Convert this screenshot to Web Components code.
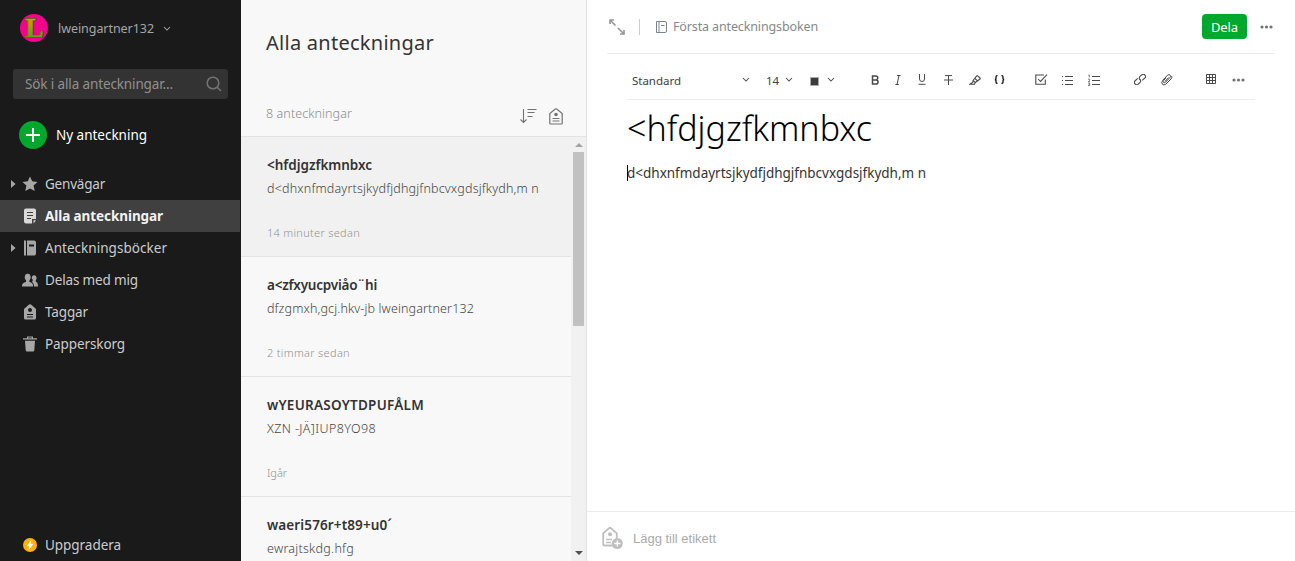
<!DOCTYPE html>
<html lang="sv">
<head>
<meta charset="utf-8">
<title>Alla anteckningar</title>
<style>
html, body { margin: 0; height: 100%; overflow: hidden; }
body { font-family: "Noto Sans", "Open Sans", sans-serif; background: #fff; }
</style>
</head>
<body>
<notes-app></notes-app>
<script>
const define = (name, html, setup) => customElements.define(name, class extends HTMLElement {
  connectedCallback() {
    if (this.shadowRoot) return;
    const t = document.createElement('template');
    t.innerHTML = html;
    this.attachShadow({ mode: 'open' }).append(t.content.cloneNode(true));
    if (setup) setup(this, this.shadowRoot);
  }
});

/* A single line of text whose tracking is set so that it fills the given width. */
define('fit-text', `<style>
  :host { display: block; flex: none; white-space: pre; }
  span { display: inline-block; white-space: pre; }
</style><span><slot></slot></span>`, (host, root) => {
  const span = root.querySelector('span');
  const target = Number(host.getAttribute('width'));
  const natural = span.getBoundingClientRect().width;
  const count = [...host.textContent].length;
  if (target && natural) span.style.letterSpacing = ((target - natural) / count).toFixed(3) + 'px';
});

const icons = {
  chevron: [8, 5, '<path d="M1 1l3 3 3-3" fill="none" stroke="currentColor" stroke-width="1.050"/>'],
  search: [16, 16, '<g fill="none" stroke="currentColor" stroke-width="1.5"><circle cx="7" cy="7" r="5.8"/><path d="M11.2 11.2l3.8 3.8"/></g>'],
  plus: [28, 28, '<circle cx="14" cy="14" r="14" fill="#00a82d"/><path d="M14 7v14M7 14h14" stroke="#fff" stroke-width="2"/>'],
  star: [16, 16, '<path fill="currentColor" d="M8 .6l2.200 4.700 5.300.6-3.900 3.700 1.100 5.400L8 12.400 3.300 15l1.100-5.400L.5 5.900l5.300-.6z"/>'],
  note: [16, 16, '<path fill="currentColor" d="M4 .5h8a2 2 0 012 2V11h-4v4.500H4a2 2 0 01-2-2v-11a2 2 0 012-2zM11.500 12.200H14l-2.500 3.200z"/><path d="M5 4.500h6M5 7.500h6M5 10.500h4" stroke="#404040" stroke-width="1"/>'],
  book: [16, 16, '<path fill="currentColor" d="M2 .5h2v15H2zM5 .5h7a2 2 0 012 2v11a2 2 0 01-2 2H5z"/><path d="M7 5.500h5" stroke="#1a1a1a" stroke-width="2"/>'],
  people: [16, 16, '<g fill="currentColor"><ellipse cx="5.700" cy="5.200" rx="2.900" ry="3.400"/><path d="M4 7h3.400v3c2.600.7 3.700 1.400 3.700 4.500H0C0 11.400 1.400 10.700 4 10z"/><path d="M9.800 5.500a2.400 2.700 0 114.200 2.200c-.6.6-.4 2 .2 2.300 1.300.6 1.800 2 1.800 4.500h-4c0-2.600-.7-3.800-2-4.600.8-1 1-1.500.6-2.400-.6-.5-.8-1-.8-2z"/></g>'],
  tag: [16, 16, '<path fill="currentColor" fill-rule="evenodd" d="M7 .6a1.500 1.500 0 012 0l4.500 3.800q.5.500.5 1.200v8.400a1.500 1.500 0 01-1.500 1.500h-9A1.500 1.500 0 012 14V5.600q0-.7.5-1.200zM8 4a2 2 0 100 4 2 2 0 000-4zM5 10v1h6v-1zM5 12.500v1h6v-1z"/>'],
  trash: [16, 16, '<path fill="currentColor" d="M1 3.500V2.300h4V.5h6v1.800h4v1.200zM6.200 2.300h3.600v-.7H6.200zM3 4.800h10l-.7 9.400q-.1 1.300-1.300 1.300H5q-1.200 0-1.300-1.300z"/>'],
  bolt: [14, 14, '<circle cx="7" cy="7" r="7" fill="#ffb10a"/><path d="M7.900 2.700L4.200 7.900h2.300l-.6 3.500 4-5.200H7.400z" fill="#fff" stroke="#fff" stroke-width=".5"/>'],
  sort: [17, 16, '<path d="M3.500 1v13M.5 11.500l3 3 3-3M7.500 1.500h9M7.500 4.500h7M7.500 8.500h5" fill="none" stroke="currentColor" stroke-width="1.100"/>'],
  tagline: [14, 17, '<path d="M1.500 16h11q.7 0 .7-.7V5.500L7.700 1q-.7-.5-1.400 0L.8 5.500v9.800q0 .7.700.7zM3.500 10.500h7M3.500 13h7" fill="none" stroke="currentColor" stroke-width="1.200"/><circle cx="7" cy="6.500" r="1.800" fill="currentColor"/>'],
  expand: [16, 16, '<path d="M1 5V1H5M1 1l5.500 5.500M9 9l6 6M15 11v4H11" fill="none" stroke="currentColor" stroke-width="1.700"/>'],
  bookline: [11, 12, '<path d="M.5.5h8.500q1.500 0 1.500 1.500v8q0 1.500-1.500 1.500H.5zM3 .5v11M5 4.500h3.500" fill="none" stroke="currentColor"/>'],
  dots: [13, 4, '<g fill="currentColor"><circle cx="2" cy="2" r="1.600"/><circle cx="6.500" cy="2" r="1.600"/><circle cx="11" cy="2" r="1.600"/></g>'],
  square: [9, 9, '<path d="M.5.5h8v8h-8z" fill="#3c3c3c" stroke="#aaa"/>'],
  bold: [8, 10, '<path d="M1.500 1h3.300a1.900 1.900 0 010 3.900H1.500zM1.500 4.900H5a2 2 0 010 4.100H1.500z" fill="none" stroke="currentColor" stroke-width="1.500"/>'],
  italic: [7, 10, '<path d="M2 .5h3.500M.3 9.500h3.500M4 .5l-2 9" fill="none" stroke="currentColor"/>'],
  underline: [8, 11, '<path d="M1.500 0v5a2.500 2.500 0 005 0V0M.5 10.300h7" fill="none" stroke="currentColor"/>'],
  strike: [9, 10, '<path d="M1 .6h7M4.500.6V10M0 5h9" fill="none" stroke="currentColor"/>'],
  marker: [12, 10, '<path d="M4 5.500l3.700-4.700q.5-.5 1 0L11 3q.5.500 0 1L6.300 7.500zM4 5.500q.3 1.300-.8 2.300L.7 9.300h4.800l.8-1.800M6 3.500l2.700 2.600" fill="none" stroke="currentColor" stroke-width="1.100"/>'],
  code: [11, 9, '<path d="M3.500.6Q2 .5 2 2v1.300Q2 4.500.8 4.500 2 4.500 2 5.700V7q0 1.500 1.500 1.400M7.500.6Q9 .5 9 2v1.300q0 1.200 1.200 1.200Q9 4.500 9 5.700V7q0 1.500-1.500 1.400" fill="none" stroke="#111" stroke-width="1.300"/>'],
  check: [13, 11, '<path d="M9 1H.8v9.300h9.500V5.500M3.200 5l2.300 2.500L12 .7" fill="none" stroke="currentColor" stroke-width="1.100"/>'],
  bullets: [11, 10, '<path d="M3 1.500h8M3 5.500h8M3 9.500h8M0 1.500h1M0 5.500h1M0 9.500h1" stroke="currentColor"/>'],
  numbers: [12, 12, '<path d="M4 2.500h8M4 6.500h8M4 10.500h8" stroke="currentColor"/><path d="M.3 1h1v2.500M0 5.200h1.700v1.100L.4 7.500H2M0 9h1.700v2.500H0M.5 10.200h1" fill="none" stroke="currentColor" stroke-width=".7"/>'],
  link: [12, 11, '<g fill="none" stroke="currentColor" stroke-width="1.100" transform="rotate(-42 6 5.500)"><path d="M5 3.200H1.600a2.200 2.200 0 000 4.500H4a2.200 2.200 0 002.100-2.600"/><path d="M7 7.700h3.400a2.200 2.200 0 000-4.500H8a2.200 2.200 0 00-2.100 2.600"/></g>'],
  clip: [12, 12, '<path d="M5 3.800L2.700 6.500q-.8 1.300 0 2 1 .6 2-.4L9 3.500q1-1.300.2-2.200Q8-.2 6.500 1.200L1.800 6.300Q0 8.500 1.300 10.200q1.500 1.600 3.500 0L10 5q1.300-1.600.7-3M4 7.400L7.500 3.600" fill="none" stroke="currentColor" stroke-width="1"/>'],
  table: [11, 11, '<path d="M.5.500h9v9h-9zM3.500.5v9M6.500.5v9M.5 3.500h9M.5 6.500h9" fill="none" stroke="currentColor"/>'],
  addtag: [22, 23, '<path d="M13 19.500H3.500q-1.300 0-1.300-1.300V7.300L8 2.300q1-1 2 0l5.800 5v5.200" fill="none" stroke="currentColor" stroke-width="1.800"/><circle cx="9" cy="8.200" r="2" fill="currentColor"/><path d="M5 13.500h6M5 16.500h5" stroke="currentColor" stroke-width="1.300"/><circle cx="16.300" cy="17.500" r="5.500" fill="currentColor"/><path d="M16.300 14.500v6M13.300 17.500h6" stroke="#fff" stroke-width="1.300"/>'],
  caret: [5, 8, '<path d="M0 0l4.500 4L0 8z" fill="currentColor"/>'],
  up: [8, 4, '<path d="M0 4l4-4 4 4z" fill="currentColor"/>'],
  down: [8, 4, '<path d="M0 0l4 4 4-4z" fill="currentColor"/>']
};
define('ui-icon', `<style>:host { display: block; flex: none; line-height: 0; } svg { display: block; }</style><slot></slot>`, (host, root) => {
  const [w, h, body] = icons[host.getAttribute('name')];
  const s = Number(host.getAttribute('scale') || 1);
  root.innerHTML += `<svg width="${w * s}" height="${h * s}" viewBox="0 0 ${w} ${h}">${body}</svg>`;
});

define('user-avatar', `<style>:host { display: block; width: 28px; height: 28px; flex: none; } svg { display: block; }</style>
<svg width="28" height="28" viewBox="0 0 28 28"><defs><linearGradient id="g" x2="0" y2="1"><stop offset=".2" stop-color="#d09a00"/><stop offset=".5" stop-color="#9aa010"/><stop offset=".8" stop-color="#5f9f26"/></linearGradient></defs>
<circle cx="14" cy="14" r="14" fill="#f0058c"/>
<text x="5.500" y="22.800" font-family="Liberation Serif, serif" font-weight="700" font-size="27" fill="#5a4a12" stroke="#5a4a12" stroke-width="1.800">L</text>
<text x="5.500" y="22.800" aria-hidden="true" font-family="Liberation Serif, serif" font-weight="700" font-size="27" fill="url(#g)" stroke="url(#g)" stroke-width=".5">L</text></svg>`);

define('nav-item', `<style>
  :host { display: flex; align-items: center; height: 32px; width: 240px; color: #a6a6a6; font-size: 13.5px; }
  :host([selected]) { background: #404040; color: #d9d9d9; font-weight: 700; }
  .caret { width: 22px; box-sizing: border-box; padding-left: 11px; flex: none; }
  .glyph { width: 23px; display: flex; flex: none; }
  fit-text { color: #ccc; line-height: 20px; }
  :host([selected]) fit-text { color: #f2f2f2; }
</style><div class="caret"></div><div class="glyph"></div><fit-text></fit-text>`, (host, root) => {
  if (host.hasAttribute('expandable')) root.querySelector('.caret').innerHTML = '<ui-icon name="caret"></ui-icon>';
  root.querySelector('.glyph').innerHTML = `<ui-icon name="${host.getAttribute('icon')}"></ui-icon>`;
  const label = document.createElement('fit-text');
  label.setAttribute('width', host.getAttribute('width'));
  label.textContent = host.getAttribute('label');
  root.querySelector('fit-text').replaceWith(label);
});

define('side-bar', `<style>
  :host { display: flex; flex-direction: column; width: 241px; flex: none; background: #1a1a1a; color: #ccc; }
  .user { display: flex; align-items: center; height: 28px; margin: 14px 0 0 20px; color: #a6a6a6; font-size: 12.5px; }
  .user fit-text { margin: 0 9px 0 10px; }
  .search { display: flex; align-items: center; justify-content: space-between; height: 30px; box-sizing: border-box; margin: 27px 13px 0; padding: 0 6px 0 12px; border-radius: 3px; background: #333; color: #919191; font-size: 13.5px; }
  .search ui-icon { color: #737373; }
  .new { display: flex; align-items: center; gap: 9px; margin: 22px 0 19px 19px; color: #fff; font-size: 13.5px; }
  .upgrade { display: flex; align-items: center; gap: 8px; margin: auto 0 6px 23px; height: 20px; font-size: 13.5px; }
</style>
<div class="user"><user-avatar></user-avatar><fit-text width="96">lweingartner132</fit-text><ui-icon name="chevron"></ui-icon></div>
<div class="search"><fit-text width="148">Sök i alla anteckningar...</fit-text><ui-icon name="search"></ui-icon></div>
<div class="new"><ui-icon name="plus"></ui-icon><fit-text width="91">Ny anteckning</fit-text></div>
<nav>
<nav-item icon="star" label="Genvägar" width="60" expandable></nav-item>
<nav-item icon="note" label="Alla anteckningar" width="118" selected></nav-item>
<nav-item icon="book" label="Anteckningsböcker" width="122" expandable></nav-item>
<nav-item icon="people" label="Delas med mig" width="93"></nav-item>
<nav-item icon="tag" label="Taggar" width="43"></nav-item>
<nav-item icon="trash" label="Papperskorg" width="80"></nav-item>
</nav>
<div class="upgrade"><ui-icon name="bolt"></ui-icon><fit-text width="76">Uppgradera</fit-text></div>`);

define('note-card', `<style>
  :host { display: block; height: 120px; box-sizing: border-box; padding: 18px 0 0 26px; border-bottom: 1px solid #e3e3e3; flex: none; background: #f8f8f8; }
  :host([selected]) { background: #f1f1f1; }
  .t { font-size: 13.500px; line-height: 20px; font-weight: 600; color: #333; }
  .s { font-size: 12.500px; line-height: 20px; margin-top: 4px; font-weight: 300; color: #444; }
  .d { font-size: 11px; line-height: 18px; margin-top: 25px; font-weight: 300; color: #919191; }
</style><div class="t"><slot name="title"></slot></div><div class="s"><slot name="snippet"></slot></div><div class="d"><slot name="date"></slot></div>`);

define('scroll-bar', `<style>
  :host { display: flex; flex-direction: column; align-items: center; width: 15px; box-sizing: border-box; background: #f1f1f1; padding: 6px 0 6px; color: #a3a3a3; }
  .thumb { width: 11px; height: 174px; margin-top: 5px; background: #c1c1c1; }
  .down { margin-top: auto; color: #505050; }
</style><ui-icon name="up"></ui-icon><div class="thumb"></div><ui-icon class="down" name="down"></ui-icon>`);

define('note-list', `<style>
  :host { display: flex; flex-direction: column; width: 346px; box-sizing: border-box; flex: none; border-right: 1px solid #e3e3e3; background: #f8f8f8; }
  header { height: 137px; box-sizing: border-box; flex: none; padding: 27px 23px 0 25px; border-bottom: 1px solid #e3e3e3; }
  .title { font-size: 20px; line-height: 32px; color: #333; }
  .row { display: flex; align-items: flex-start; margin-top: 45px; color: #737373; }
  .count { font-size: 12.500px; line-height: 20px; margin-right: auto; font-weight: 300; color: #8c8c8c; }
  .row ui-icon { margin-top: 4px; margin-left: 12px; }
  .body { display: flex; flex: 1; min-height: 0; }
  .cards { flex: 1; display: flex; flex-direction: column; overflow: hidden; }
</style>
<header><fit-text class="title" width="168">Alla anteckningar</fit-text>
<div class="row"><fit-text class="count" width="86">8 anteckningar</fit-text><ui-icon name="sort"></ui-icon><ui-icon name="tagline"></ui-icon></div></header>
<div class="body"><div class="cards">
<note-card selected><fit-text slot="title" width="105">&lt;hfdjgzfkmnbxc</fit-text><fit-text slot="snippet" width="272">d&lt;dhxnfmdayrtsjkydfjdhgjfnbcvxgdsjfkydh,m n</fit-text><fit-text slot="date" width="93">14 minuter sedan</fit-text></note-card>
<note-card><fit-text slot="title" width="110">a&lt;zfxyucpviåo¨hi</fit-text><fit-text slot="snippet" width="207">dfzgmxh,gcj.hkv-jb lweingartner132</fit-text><fit-text slot="date" width="83">2 timmar sedan</fit-text></note-card>
<note-card><fit-text slot="title" width="157">wYEURASOYTDPUFÅLM</fit-text><fit-text slot="snippet" width="109">XZN -JÄ]IUP8YO98</fit-text><fit-text slot="date" width="20">Igår</fit-text></note-card>
<note-card><fit-text slot="title" width="125">waeri576r+t89+u0´</fit-text><fit-text slot="snippet" width="87">ewrajtskdg.hfg</fit-text></note-card>
</div><scroll-bar></scroll-bar></div>`);

define('tool-bar', `<style>
  :host { display: grid; grid-template-columns: 110px 24px 19px 25px 61px 24px 23px 26px 25px 25px 41px 27px 26px 46px 27px 45px 26px 1fr; align-items: center; height: 46px; box-sizing: border-box; margin: 0 40px; padding: 6px 0 0 5px; border-bottom: 1px solid #ececec; color: #4a4a4a; font-size: 11.5px; }
  fit-text { line-height: 18px; padding-top: 2px; color: #404040; }
  .color { display: flex; align-items: center; gap: 8px; }
  .sq { margin-top: 3px; }
  .more { color: #737373; }
</style>
<fit-text width="49">Standard</fit-text><ui-icon name="chevron"></ui-icon>
<fit-text width="13">14</fit-text><ui-icon name="chevron"></ui-icon>
<div class="color"><ui-icon class="sq" name="square"></ui-icon><ui-icon name="chevron"></ui-icon></div>
<ui-icon name="bold"></ui-icon><ui-icon name="italic"></ui-icon><ui-icon name="underline"></ui-icon><ui-icon name="strike"></ui-icon><ui-icon name="marker"></ui-icon><ui-icon name="code"></ui-icon>
<ui-icon name="check"></ui-icon><ui-icon name="bullets"></ui-icon><ui-icon name="numbers"></ui-icon>
<ui-icon name="link"></ui-icon><ui-icon name="clip"></ui-icon>
<ui-icon name="table"></ui-icon><ui-icon class="more" name="dots"></ui-icon>`);

define('note-editor', `<style>
  :host { display: flex; flex-direction: column; flex: 1; min-width: 0; background: #fff; }
  header { display: flex; align-items: center; height: 54px; box-sizing: border-box; margin: 0 20px; padding: 0 2px 0 2px; border-bottom: 1px solid #ececec; color: #999; font-size: 12.500px; flex: none; }
  .rule { width: 1px; height: 16px; margin: 0 16px 0 14px; background: #ccc; }
  .nb { color: #7a858b; margin-right: 6px; }
  .name { color: #84898c; margin-right: auto; }
  .share { display: flex; align-items: center; justify-content: center; width: 45px; height: 25px; margin-right: 13px; border-radius: 4px; background: #00a82d; color: #fff; font-size: 13px; }
  .dots { color: #737373; }
  h1 { margin: 6px 0 0 40px; font-size: 34px; line-height: 44px; font-weight: 300; color: #000; }
  .body { display: flex; align-items: center; height: 18px; margin: 14px 0 0 40px; font-size: 13.500px; color: #333; }
  .cursor { width: 1px; height: 16px; margin-right: -1px; background: #000; }
  footer { display: flex; align-items: center; height: 50px; box-sizing: border-box; margin-top: auto; padding: 1px 0 0 14px; border-top: 1px solid #ececec; gap: 10px; font-family: "Liberation Sans", sans-serif; font-size: 13px; color: #aaa; }
  footer ui-icon { color: #bfbfbf; }
  footer fit-text { padding-top: 3px; }
</style>
<header><ui-icon name="expand"></ui-icon><div class="rule"></div><ui-icon class="nb" name="bookline"></ui-icon><fit-text class="name" width="145">Första anteckningsboken</fit-text><div class="share"><fit-text width="27">Dela</fit-text></div><ui-icon class="dots" name="dots"></ui-icon></header>
<tool-bar></tool-bar>
<h1><fit-text width="245">&lt;hfdjgzfkmnbxc</fit-text></h1>
<div class="body"><div class="cursor"></div><fit-text width="299">d&lt;dhxnfmdayrtsjkydfjdhgjfnbcvxgdsjfkydh,m n</fit-text></div>
<footer><ui-icon name="addtag"></ui-icon><fit-text width="83">Lägg till etikett</fit-text></footer>`);

define('notes-app', `<style>:host { display: flex; width: 1295px; height: 561px; overflow: hidden; }</style><side-bar></side-bar><note-list></note-list><note-editor></note-editor>`);
</script>
</body>
</html>
